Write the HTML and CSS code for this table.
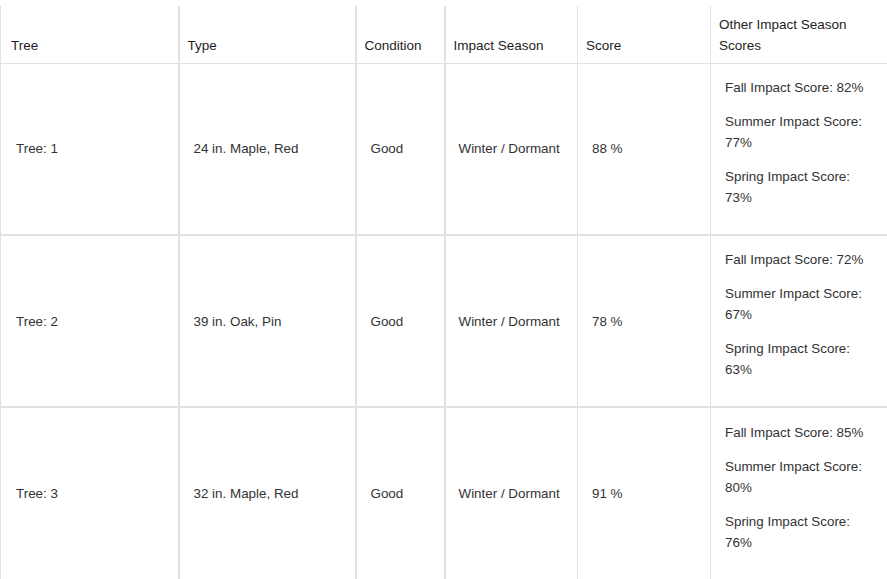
FILE: index.html
```html
<!DOCTYPE html>
<html>
<head>
<meta charset="utf-8">
<link rel="stylesheet" href="styles.css">
</head>
<body>
<table class="trees">
  <colgroup>
    <col class="c-tree">
    <col class="c-type">
    <col class="c-cond">
    <col class="c-season">
    <col class="c-score">
    <col class="c-other">
  </colgroup>
  <thead>
    <tr>
      <th class="k1">Tree</th>
      <th class="k2">Type</th>
      <th class="k3">Condition</th>
      <th class="k4">Impact Season</th>
      <th class="k5">Score</th>
      <th class="k6">Other Impact Season Scores</th>
    </tr>
  </thead>
  <tbody>
    <tr>
      <td class="k1">Tree: 1</td>
      <td class="k2">24 in. Maple, Red</td>
      <td class="k3">Good</td>
      <td class="k4">Winter / Dormant</td>
      <td class="k5">88 %</td>
      <td class="k6 other"><p>Fall Impact Score: 82%</p><p>Summer Impact Score: 77%</p><p>Spring Impact Score: 73%</p></td>
    </tr>
    <tr>
      <td class="k1">Tree: 2</td>
      <td class="k2">39 in. Oak, Pin</td>
      <td class="k3">Good</td>
      <td class="k4">Winter / Dormant</td>
      <td class="k5">78 %</td>
      <td class="k6 other"><p>Fall Impact Score: 72%</p><p>Summer Impact Score: 67%</p><p>Spring Impact Score: 63%</p></td>
    </tr>
    <tr>
      <td class="k1">Tree: 3</td>
      <td class="k2">32 in. Maple, Red</td>
      <td class="k3">Good</td>
      <td class="k4">Winter / Dormant</td>
      <td class="k5">91 %</td>
      <td class="k6 other"><p>Fall Impact Score: 85%</p><p>Summer Impact Score: 80%</p><p>Spring Impact Score: 76%</p></td>
    </tr>
  </tbody>
</table>
</body>
</html>
```
FILE: styles.css
```css
html, body {
  margin: 0;
  padding: 0;
  background: #fff;
}
body {
  font-family: "Liberation Sans", Arial, Helvetica, sans-serif;
  color: #333;
}
.trees {
  margin-top: 6px;
  width: 887px;
  table-layout: fixed;
  border-collapse: collapse;
  border-left: 1px solid #e2e2e2;
}
.c-tree { width: 178px; }
.c-type { width: 177px; }
.c-cond { width: 89px; }
.c-season { width: 133px; }
.c-score { width: 133px; }
.c-other { width: 177px; }

th {
  font-weight: normal;
  font-size: 13.5px;
  line-height: 21px;
  color: #1e1e1e;
  text-align: left;
  vertical-align: bottom;
  padding: 0 9px 7px 8px;
  height: 57px;
  box-sizing: border-box;
  border-bottom: 1px solid #e2e2e2;
}
td {
  font-size: 13.4px;
  line-height: 21px;
  color: #333;
  vertical-align: middle;
  padding: 0 14px;
  height: 172px;
  box-sizing: border-box;
  border-bottom: 2px solid #e2e2e2;
}
tbody tr:last-child td { border-bottom: none; }

.k1, .k2, .k3 { border-right: 2px solid #e2e2e2; }
.k4, .k5 { border-right: 1px solid #e2e2e2; }

th.k1 { padding-left: 10px; }
td.k1 { padding-left: 15px; }
td.k4 { padding-left: 13px; }
td.k5 { padding-left: 14px; }

.other {
  padding-top: 0;
}
.other p {
  margin: 0 0 13px;
}
```
